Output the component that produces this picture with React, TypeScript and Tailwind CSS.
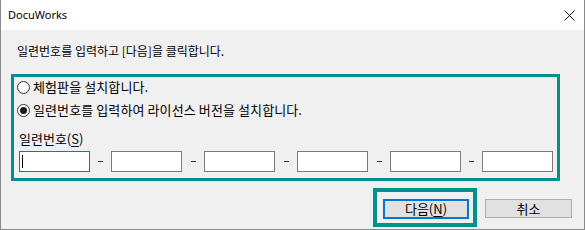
const KR = "font-['Noto_Sans_CJK_KR','Noto_Sans',sans-serif]";

function Radio({ checked, label }: { checked?: boolean; label: string }) {
  return (
    <div className="flex h-[20px] items-center">
      <span className="flex h-[13px] w-[13px] items-center justify-center rounded-full border border-[#333] bg-white">
        {checked && <span className="h-[7px] w-[7px] rounded-full bg-[#1a1a1a]" />}
      </span>
      <span className="ml-[3px] text-[13px] leading-[16px] tracking-[0.1px] text-black">{label}</span>
    </div>
  );
}

function SerialInput({ focused }: { focused?: boolean }) {
  return (
    <div
      className={
        focused
          ? 'flex h-[21px] w-[71px] items-center border border-[#0078d7] bg-white pl-[2px]'
          : 'h-[21px] w-[71px] border border-[#7a7a7a] bg-white'
      }
    >
      {focused && <span className="h-[13px] w-px bg-black" />}
    </div>
  );
}

function Dash({ wide }: { wide?: boolean }) {
  return (
    <span className={`${wide ? 'w-[22px]' : 'w-[21px]'} flex items-center justify-center`}>
      <span className="h-px w-[5px] bg-[#333]" />
    </span>
  );
}

export default function App() {
  return (
    <div className={`${KR} flex h-[230px] w-[585px] flex-col border-x border-b border-[#8a8a8a] bg-[#f0f0f0] text-black`}>
      {/* title bar */}
      <div className="flex h-[30px] items-center justify-between bg-white pl-[7px] pr-[9px]">
        <span className="font-['Noto_Sans',sans-serif] text-[11px] text-black">DocuWorks</span>
        <svg width="11" height="11" viewBox="0 0 11 11" className="mt-[1px]">
          <path d="M0.5 0.5 L10.5 10.5 M10.5 0.5 L0.5 10.5" stroke="#111" strokeWidth="1" />
        </svg>
      </div>

      <p className="ml-[16px] mt-[13px] text-[12px] leading-[16px]">
        일련번호를 입력하고 [다음]을 클릭합니다.
      </p>

      {/* options box */}
      <div className="ml-[10px] mt-[15px] h-[107px] w-[549px] border-[3px] border-[#00918c] pl-[3px]">
        <Radio label="체험판을 설치합니다." />
        <div className="mt-[3px]">
          <Radio checked label="일련번호를 입력하여 라이선스 버전을 설치합니다." />
        </div>
        <p className="ml-[2px] mt-[11px] text-[13px] leading-[16px]">
          일련번호(<span className="underline underline-offset-2">S</span>)
        </p>
        <div className="ml-[2px] mt-[4px] flex">
          <SerialInput focused />
          <Dash />
          <SerialInput />
          <Dash wide />
          <SerialInput />
          <Dash wide />
          <SerialInput />
          <Dash wide />
          <SerialInput />
          <Dash />
          <SerialInput />
        </div>
      </div>

      {/* buttons */}
      <div className="mt-[7px] flex items-start justify-end pr-[12px]">
        <div className="h-[39px] w-[104px] border-[4px] border-[#00918c] pl-[6px] pt-[7px]">
          <button className="flex h-[20px] w-[86px] items-center justify-center border-2 border-[#0078d7] bg-[#e1e1e1] text-[13px] leading-[16px]">
            다음(<span className="underline underline-offset-2">N</span>)
          </button>
        </div>
        <button className="ml-[8px] mt-[11px] flex h-[19px] w-[87px] items-center justify-center border border-[#adadad] bg-[#e1e1e1] text-[13px] leading-[16px]">
          취소
        </button>
      </div>
    </div>
  );
}
